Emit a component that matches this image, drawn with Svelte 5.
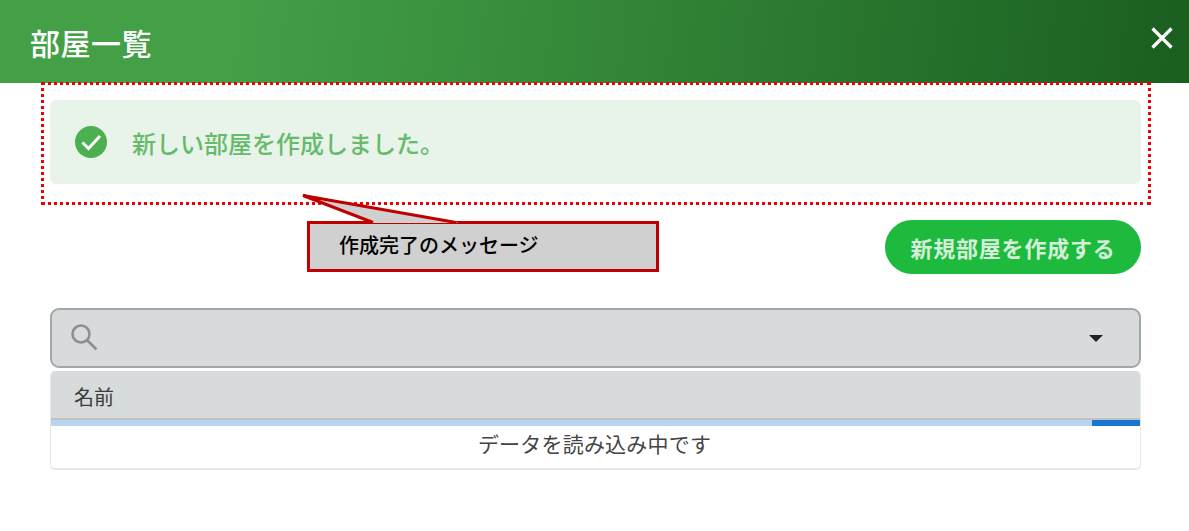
<script>
  let columns = ["名前"];
</script>

<div class="dialog">
  <header class="title-bar">
    <h1>部屋一覧</h1>
    <button class="close" aria-label="閉じる">
      <svg viewBox="0 0 24 24" width="24" height="24"><path d="M2.5 2.5 21.5 21.5M21.5 2.5 2.5 21.5" /></svg>
    </button>
  </header>

  <main class="content">
    <div class="alert">
      <svg class="check" viewBox="0 0 32 32" width="32" height="32">
        <circle cx="16" cy="16" r="16" />
        <path d="M7.5 16.5 13.5 22.5 25 10" />
      </svg>
      <span>新しい部屋を作成しました。</span>
    </div>

    <div class="actions">
      <button class="create">新規部屋を作成する</button>
    </div>

    <div class="search">
      <svg class="lens" viewBox="0 0 28 28" width="28" height="28">
        <circle cx="11" cy="11" r="8.5" />
        <path d="M17 17 26.5 26.5" />
      </svg>
      <span class="caret"></span>
    </div>

    <div class="table">
      <div class="table-head">
        {#each columns as col}
          <span>{col}</span>
        {/each}
      </div>
      <div class="progress"><div class="bar"></div></div>
      <div class="loading">データを読み込み中です</div>
    </div>
  </main>

  <!-- annotation overlay -->
  <div class="dotted"></div>
  <div class="callout">
    <svg viewBox="0 0 360 82" width="360" height="82">
      <path class="tail" d="M2 3 L72 30 L158 30 Z" />
      <path class="tail-line" d="M72 29.5 L2 2.5 L155 29.5" />
    </svg>
    <div class="callout-box">作成完了のメッセージ</div>
  </div>
</div>

<style>
  :global(body) {
    margin: 0;
    background: #fff;
  }

  .dialog {
    position: relative;
    width: 1189px;
    height: 531px;
    overflow: hidden;
    font-family: Roboto, "Noto Sans CJK JP", sans-serif;
  }

  .title-bar {
    height: 83px;
    display: flex;
    align-items: center;
    justify-content: space-between;
    box-sizing: border-box;
    padding: 0 15px 0 30px;
    background: linear-gradient(97deg, #43a047 0%, #43a047 20%, #1b5e20 100%);
    color: #fff;
  }

  .title-bar h1 {
    margin: 0;
    font-size: 30px;
    font-weight: 500;
    line-height: 1;
    position: relative;
    top: 3px;
    letter-spacing: 0.5px;
  }

  .close {
    border: none;
    background: none;
    padding: 0;
    width: 24px;
    height: 24px;
    margin-bottom: 8px;
  }

  .close path {
    stroke: #fff;
    stroke-width: 3.2;
    fill: none;
  }

  .content {
    padding: 17px 48px 0 50px;
  }

  .alert {
    height: 84px;
    display: flex;
    align-items: center;
    gap: 25px;
    box-sizing: border-box;
    padding: 0 25px;
    background: #e8f3ea;
    border-radius: 6px;
    color: #66bb6a;
    font-size: 24px;
    font-weight: 500;
  }

  .check {
    flex: none;
  }

  .check circle {
    fill: #4caf50;
  }

  .check path {
    fill: none;
    stroke: #fff;
    stroke-width: 3;
  }

  .actions {
    display: flex;
    justify-content: flex-end;
    margin-top: 36px;
  }

  .create {
    width: 256px;
    height: 54px;
    border: none;
    border-radius: 27px;
    background: #1dba3e;
    color: #d4efd9;
    font-family: inherit;
    font-size: 22px;
    font-weight: 700;
    letter-spacing: 0.8px;
  }

  .search {
    height: 60px;
    margin-top: 34px;
    display: flex;
    align-items: center;
    justify-content: space-between;
    box-sizing: border-box;
    padding: 0 36px 0 18px;
    background: #d8dbdc;
    border: 2px solid #a4a7a8;
    border-radius: 9px;
  }

  .lens {
    margin-bottom: 2px;
  }

  .lens circle,
  .lens path {
    fill: none;
    stroke: #8d9091;
    stroke-width: 2.6;
  }

  .caret {
    width: 0;
    height: 0;
    border-left: 7.5px solid transparent;
    border-right: 7.5px solid transparent;
    border-top: 7.5px solid #222;
  }

  .table {
    margin-top: 3px;
    height: 99px;
    box-sizing: border-box;
    border: 1px solid #e6e7e8;
    border-bottom-width: 2px;
    border-top: none;
    border-radius: 5px;
    overflow: hidden;
  }

  .table-head {
    height: 49px;
    box-sizing: border-box;
    padding-left: 23px;
    display: flex;
    align-items: center;
    background: #d8dbdc;
    border-bottom: 2px solid #bfc1c2;
    color: #3c3c3c;
    font-size: 20px;
    padding-top: 4px;
  }

  .progress {
    height: 6px;
    background: #b8d4f0;
    display: flex;
    justify-content: flex-end;
  }

  .bar {
    width: 48px;
    background: #1976d2;
  }

  .loading {
    text-align: center;
    color: #444;
    font-size: 21px;
    line-height: 39px;
    letter-spacing: 0.2px;
    padding-right: 2px;
  }

  .dotted {
    position: absolute;
    left: 41px;
    top: 82px;
    width: 1110px;
    height: 123px;
    box-sizing: border-box;
    border: 3px dotted #f00000;
    pointer-events: none;
  }

  .callout {
    position: absolute;
    left: 301px;
    top: 193px;
    width: 360px;
    height: 82px;
  }

  .callout svg {
    position: absolute;
    left: 0;
    top: 0;
    z-index: 1;
  }

  .tail {
    fill: #d0d0d0;
  }

  .tail-line {
    fill: none;
    stroke: #c00000;
    stroke-width: 3;
  }

  .callout-box {
    position: absolute;
    left: 6px;
    top: 28px;
    width: 352px;
    height: 51px;
    box-sizing: border-box;
    padding: 0 0 5px 29px;
    display: flex;
    align-items: center;
    background: #d0d0d0;
    border: 3px solid #c00000;
    color: #000;
    font-size: 20px;
    font-weight: 500;
  }
</style>
